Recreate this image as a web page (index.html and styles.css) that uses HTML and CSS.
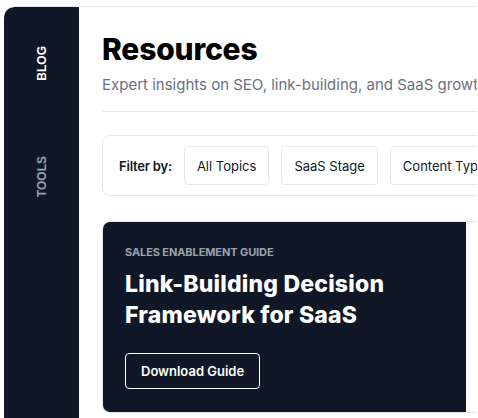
FILE: index.html
```html
<!DOCTYPE html>
<html>
<head>
<meta charset="utf-8">
<link rel="stylesheet" href="styles.css">
</head>
<body>
<div class="frame">
  <nav class="sidebar">
    <span class="side-link active">BLOG</span>
    <span class="side-link">TOOLS</span>
  </nav>
  <main class="main">
    <h1 class="title">Resources</h1>
    <p class="subtitle">Expert insights on SEO, link-building, and SaaS growth strategies</p>
    <hr class="divider">
    <div class="filters">
      <span class="filter-label">Filter by:</span>
      <button class="filter-btn">All Topics</button>
      <button class="filter-btn">SaaS Stage</button>
      <button class="filter-btn">Content Type</button>
    </div>
    <section class="feature">
      <div class="feature-body">
        <div class="eyebrow">SALES ENABLEMENT GUIDE</div>
        <h2 class="feature-title">Link-Building Decision Framework for SaaS</h2>
        <a class="outline-btn">Download Guide</a>
      </div>
      <div class="feature-side"></div>
    </section>
  </main>
</div>
</body>
</html>
```
FILE: styles.css
```css
html, body {
  margin: 0;
  padding: 0;
  background: #ffffff;
  overflow: hidden;
}
body {
  font-family: Inter, "Liberation Sans", sans-serif;
}
.frame {
  margin: 6px 0 0 4px;
  width: 473px;
  height: 412px;
  border-top: 1px solid #e5e7eb;
  border-top-left-radius: 10px;
  display: flex;
  overflow: hidden;
}
.sidebar {
  flex: 0 0 75px;
  background: #101828;
  border-top-left-radius: 10px;
  display: flex;
  flex-direction: column;
  align-items: center;
  padding-top: 39px;
  gap: 75px;
}
.side-link {
  writing-mode: vertical-rl;
  transform: rotate(180deg);
  font-family: "Liberation Sans", Arial, sans-serif;
  font-weight: 700;
  font-size: 12px;
  line-height: 12px;
  color: #99a1af;
}
.side-link.active {
  color: #ffffff;
}
.main {
  flex: 0 0 auto;
  width: 700px;
  padding: 0 0 0 23px;
}
.title {
  margin: 22px 0 0;
  font-family: Inter, sans-serif;
  font-weight: 800;
  font-size: 30px;
  line-height: 40px;
  letter-spacing: -0.2px;
  color: #000;
}
.subtitle {
  margin: 6px 0 0;
  font-size: 15px;
  line-height: 20px;
  color: #6a7282;
  white-space: nowrap;
}
.divider {
  margin: 16px 0 0;
  border: 0;
  border-top: 1px solid #e5e7eb;
}
.filters {
  margin-top: 23px;
  border: 1px solid #e5e7eb;
  border-radius: 8px;
  padding: 10px 16px;
  display: flex;
  align-items: center;
  gap: 12px;
}
.filter-label {
  font-size: 13px;
  font-weight: 600;
  letter-spacing: -0.2px;
  color: #101828;
}
.filter-btn {
  font-family: Inter, "Liberation Sans", sans-serif;
  font-size: 13px;
  color: #101828;
  background: #fff;
  border: 1px solid #e5e7eb;
  border-radius: 4px;
  height: 39px;
  padding: 0 12px;
}
.feature {
  margin-top: 25px;
  display: flex;
  border: 1px solid #e5e7eb;
  border-radius: 8px;
  overflow: hidden;
  height: 190px;
}
.feature-body {
  flex: 0 0 363px;
  background: #101828;
  padding: 22px 22px 20px;
  box-sizing: border-box;
}
.feature-side {
  flex: 1;
  background: #fff;
}
.eyebrow {
  font-size: 11px;
  font-weight: 700;
  color: #99a1af;
  line-height: 16px;
  letter-spacing: -0.1px;
}
.feature-title {
  margin: 9px 0 0;
  font-family: Inter, sans-serif;
  font-weight: 800;
  font-size: 23px;
  line-height: 31px;
  letter-spacing: 0.2px;
  color: #fff;
}
.outline-btn {
  display: inline-flex;
  align-items: center;
  margin-top: 22px;
  height: 36px;
  padding: 0 15px;
  border: 1px solid #fff;
  border-radius: 4px;
  color: #fff;
  font-size: 13px;
  font-weight: 600;
  box-sizing: border-box;
}
```
